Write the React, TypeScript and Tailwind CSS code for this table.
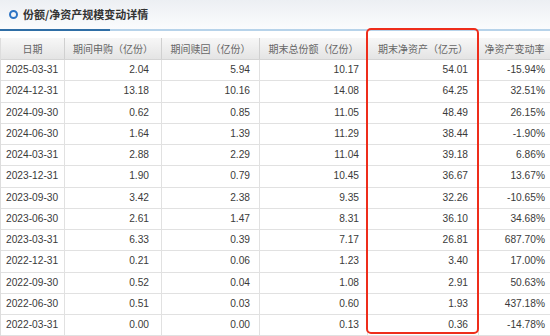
const rows = [
  ["2025-03-31", "2.04", "5.94", "10.17", "54.01", "-15.94%"],
  ["2024-12-31", "13.18", "10.16", "14.08", "64.25", "32.51%"],
  ["2024-09-30", "0.62", "0.85", "11.05", "48.49", "26.15%"],
  ["2024-06-30", "1.64", "1.39", "11.29", "38.44", "-1.90%"],
  ["2024-03-31", "2.88", "2.29", "11.04", "39.18", "6.86%"],
  ["2023-12-31", "1.90", "0.79", "10.45", "36.67", "13.67%"],
  ["2023-09-30", "3.42", "2.38", "9.35", "32.26", "-10.65%"],
  ["2023-06-30", "2.61", "1.47", "8.31", "36.10", "34.68%"],
  ["2023-03-31", "6.33", "0.39", "7.17", "26.81", "687.70%"],
  ["2022-12-31", "0.21", "0.06", "1.23", "3.40", "17.00%"],
  ["2022-09-30", "0.52", "0.04", "1.08", "2.91", "50.63%"],
  ["2022-06-30", "0.51", "0.03", "0.60", "1.93", "437.18%"],
  ["2022-03-31", "0.00", "0.00", "0.13", "0.36", "-14.78%"],
];

const heads = ["日期", "期间申购（亿份）", "期间赎回（亿份）", "期末总份额（亿份）", "期末净资产（亿元）", "净资产变动率"];

const cols = [
  "w-[64px] pl-[5px] text-left",
  "w-[97px] pr-[12px] text-right",
  "w-[98px] pr-[9px] text-right",
  "w-[108px] pr-[8px] text-right",
  "w-[111px] pr-[10px] text-right",
  "w-[72px] pr-[5px] text-right",
];

const widths = ["w-[64px]", "w-[97px]", "w-[98px]", "w-[108px]", "w-[111px]", "w-[72px]"];

export default function App() {
  return (
    <div className="relative w-[550px] h-[336px] overflow-hidden bg-white font-['Liberation_Sans','Noto_Sans_CJK_SC',sans-serif]">
      {/* title bar */}
      <div className="h-[29px] flex items-center bg-gradient-to-b from-[#eceff3] to-[#fbfcfd] pl-[9px]">
        <span className="w-[9px] h-[9px] rounded-full border-2 border-[#2d74c4]" />
        <span className="ml-[5px] text-[11px] font-bold text-[#333] font-['Noto_Sans_CJK_SC',sans-serif]">
          份额/净资产规模变动详情
        </span>
      </div>
      <div className="flex h-[2px]">
        <div className="w-[110px] bg-[#2f6ea6]" />
        <div className="flex-1 bg-[#b7d3ea]" />
      </div>

      {/* table */}
      <div className="mt-[7px] border-l border-[#ddd]">
        <div className="flex h-[22px] bg-gradient-to-b from-[#f7f7f7] to-[#e4e4e4] border-b border-[#d4d4d4]">
          {heads.map((h, i) => (
            <div
              key={h}
              className={`${widths[i]} shrink-0 flex items-center justify-center border-r border-[#d0d0d0] text-[10px] text-[#666] font-['Noto_Sans_CJK_SC',sans-serif] whitespace-nowrap`}
            >
              {h}
            </div>
          ))}
        </div>
        {rows.map((r) => (
          <div key={r[0]} className="flex h-[21.25px] border-b border-[#e1e1e1]">
            {r.map((c, i) => (
              <div
                key={i}
                className={`${cols[i]} shrink-0 leading-[20px] border-r border-[#e1e1e1] text-[10.2px] text-[#3a3a3a] whitespace-nowrap`}
              >
                {c}
              </div>
            ))}
          </div>
        ))}
      </div>

      {/* highlight box */}
      <div className="absolute left-[366px] top-[28px] w-[113px] h-[306px] border-[2.5px] border-[#ee2d1b] rounded-[5px]" />
    </div>
  );
}
